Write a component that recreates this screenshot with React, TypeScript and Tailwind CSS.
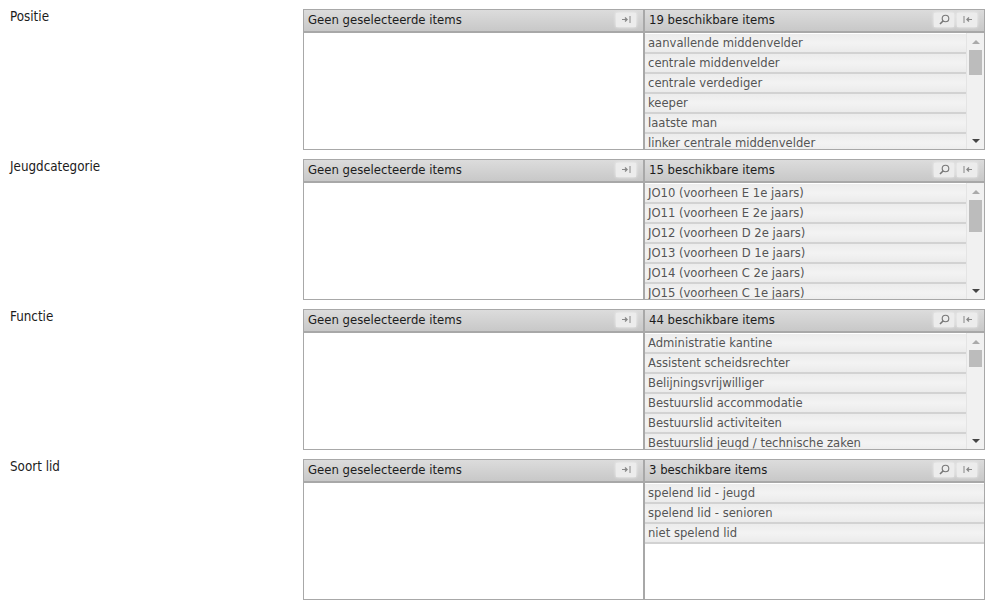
import React from "react";

type Picker = {
  label: string;
  count: number;
  items: string[];
  thumbHeight?: number;
};

const pickers: Picker[] = [
  {
    label: "Positie",
    count: 19,
    thumbHeight: 25,
    items: [
      "aanvallende middenvelder",
      "centrale middenvelder",
      "centrale verdediger",
      "keeper",
      "laatste man",
      "linker centrale middenvelder",
    ],
  },
  {
    label: "Jeugdcategorie",
    count: 15,
    thumbHeight: 32,
    items: [
      "JO10 (voorheen E 1e jaars)",
      "JO11 (voorheen E 2e jaars)",
      "JO12 (voorheen D 2e jaars)",
      "JO13 (voorheen D 1e jaars)",
      "JO14 (voorheen C 2e jaars)",
      "JO15 (voorheen C 1e jaars)",
    ],
  },
  {
    label: "Functie",
    count: 44,
    thumbHeight: 17,
    items: [
      "Administratie kantine",
      "Assistent scheidsrechter",
      "Belijningsvrijwilliger",
      "Bestuurslid accommodatie",
      "Bestuurslid activiteiten",
      "Bestuurslid jeugd / technische zaken",
    ],
  },
  {
    label: "Soort lid",
    count: 3,
    items: ["spelend lid - jeugd", "spelend lid - senioren", "niet spelend lid"],
  },
];

function ToolButton({ children }: { children: React.ReactNode }) {
  return (
    <div className="w-[20px] h-[14px] flex items-center justify-center bg-[#ececec] shadow-[0_0_3px_rgba(255,255,255,0.9)]">
      {children}
    </div>
  );
}

function ArrowRightIcon() {
  return (
    <svg width="9" height="7" viewBox="0 0 9 7" fill="none" stroke="#888" strokeWidth="1">
      <path d="M0 3.5h5" />
      <path d="M3 1.5l2 2-2 2" strokeWidth="1.4" />
      <path d="M8 0v7" />
    </svg>
  );
}

function ArrowLeftIcon() {
  return (
    <svg width="9" height="7" viewBox="0 0 9 7" fill="none" stroke="#888" strokeWidth="1">
      <path d="M1 0v7" />
      <path d="M9 3.5H4" />
      <path d="M6 1.5l-2 2 2 2" strokeWidth="1.4" />
    </svg>
  );
}

function SearchIcon() {
  return (
    <svg width="11" height="11" viewBox="0 0 11 11" fill="none" stroke="#777" strokeWidth="1.1">
      <circle cx="6.5" cy="4.5" r="3.3" />
      <path d="M4 7L1 10" strokeWidth="1.6" />
    </svg>
  );
}

function Header({ title, children }: { title: string; children: React.ReactNode }) {
  return (
    <div className="h-[23px] shrink-0 flex items-center justify-between pr-[7px] pl-[4px] pb-[2px] bg-gradient-to-b from-[#dcdcdc] to-[#c8c8c8] border-b-2 border-[#a8a8a8]">
      <span className="text-[13px] text-[#1c1c1c]">{title}</span>
      <div className="flex gap-[3px]">{children}</div>
    </div>
  );
}

function Scrollbar({ thumbHeight }: { thumbHeight: number }) {
  return (
    <div className="w-[18px] shrink-0 flex flex-col items-center bg-[#f1f1f1] border-l border-[#e4e4e4]">
      <div className="h-[17px] flex items-center justify-center">
        <div className="w-0 h-0 border-x-[4px] border-x-transparent border-b-[4px] border-b-[#aaaaaa]" />
      </div>
      <div className="w-[13px] bg-[#bcbcbc]" style={{ height: thumbHeight }} />
      <div className="flex-1" />
      <div className="h-[17px] flex items-center justify-center">
        <div className="w-0 h-0 border-x-[4px] border-x-transparent border-t-[4px] border-t-[#444]" />
      </div>
    </div>
  );
}

function PickerRow({ picker }: { picker: Picker }) {
  return (
    <div className="flex h-[141px] mb-[9px]">
      <div className="w-[293px] shrink-0 text-[13.3px] text-[#1c1c1c] leading-[15px]">{picker.label}</div>
      <div className="w-[682px] shrink-0 flex border border-[#a8a8a8]">
        <div className="w-[341px] shrink-0 flex flex-col border-r-2 border-[#a8a8a8]">
          <Header title="Geen geselecteerde items">
            <ToolButton>
              <ArrowRightIcon />
            </ToolButton>
          </Header>
        </div>
        <div className="flex-1 min-w-0 flex flex-col">
          <Header title={`${picker.count} beschikbare items`}>
            <ToolButton>
              <SearchIcon />
            </ToolButton>
            <ToolButton>
              <ArrowLeftIcon />
            </ToolButton>
          </Header>
          <div className="flex-1 min-h-0 flex">
            <div className="flex-1 min-w-0 overflow-hidden pt-px">
              {picker.items.map((item) => (
                <div
                  key={item}
                  className="h-[20px] pl-[3px] text-[12.9px] leading-[18px] text-[#555] whitespace-nowrap border-b-2 border-[#d2d2d2] bg-gradient-to-b from-[#ececec] via-[#f3f3f3] to-[#ebebeb]"
                >
                  {item}
                </div>
              ))}
            </div>
            {picker.thumbHeight ? <Scrollbar thumbHeight={picker.thumbHeight} /> : null}
          </div>
        </div>
      </div>
    </div>
  );
}

export default function App() {
  return (
    <div className="min-h-screen bg-white pt-[9px] pl-[10px] font-['DejaVu_Sans_Condensed','DejaVu_Sans',sans-serif]">
      {pickers.map((picker) => (
        <PickerRow key={picker.label} picker={picker} />
      ))}
    </div>
  );
}
